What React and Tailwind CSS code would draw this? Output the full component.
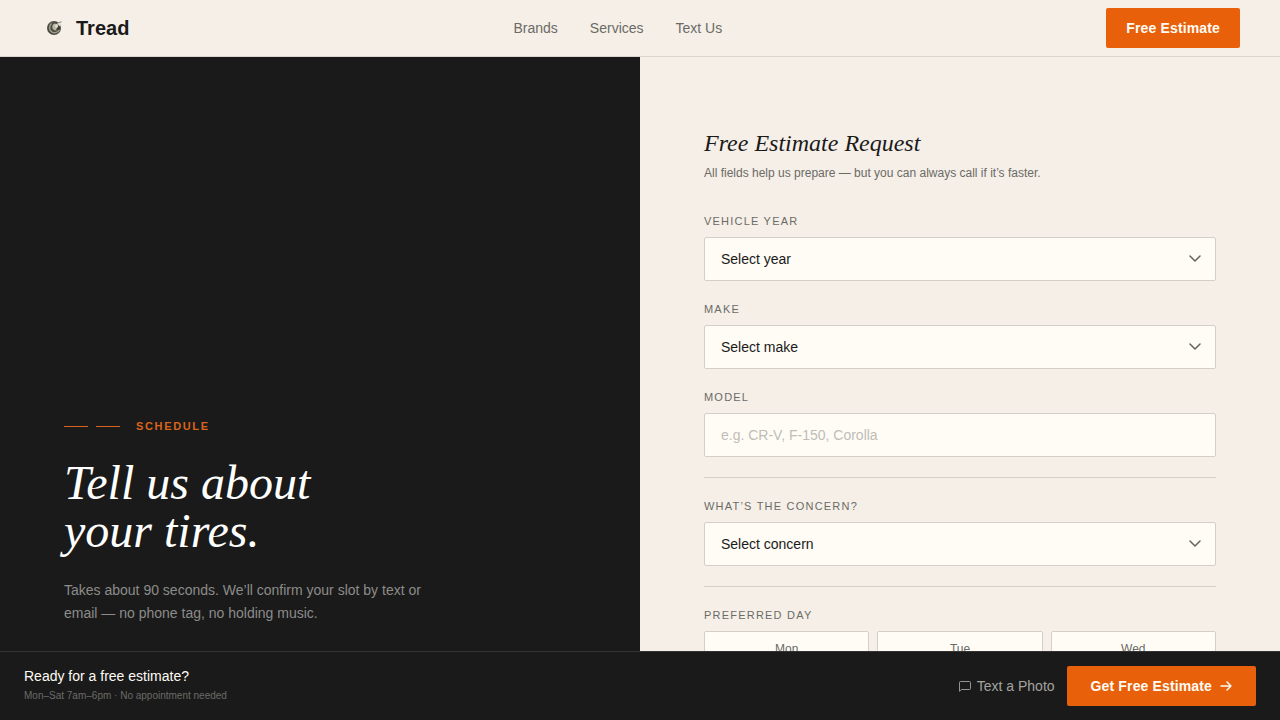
import React from "react";

const sans = "font-['Liberation_Sans',Arial,sans-serif]";
const serif = "font-['Liberation_Serif','Times_New_Roman',serif]";

function LogoMark() {
  return (
    <svg className="size-7" viewBox="0 0 28 28" aria-hidden="true">
      <circle cx="14" cy="14" r="7" fill="#4b4a42" />
      <path d="M11.500 9.500c-2.800 2.200-2.600 7 .6 8.600 2.800 1.400 6 .2 7.200-2.400" stroke="#a19d8c" strokeWidth="1.500" fill="none" />
      <path d="M14.500 9.500c-2.400 1-3 4.200-1.200 6 1.800 1.600 4.400 1 5.400-1l-1.800-4.400z" fill="#b9b5a2" />
      <path d="M14.500 11.500l2.600-1.800 1.200 2.400-2.200 2.200z" fill="#dedacb" />
      <path d="M18 8.200l3 1.800-1 2.400-2.600-2.400z" fill="#e4dfd2" />
      <path d="M15.800 15.600l3-3.400 1.200.8-1.600 3z" fill="#37362f" />
      <path d="M17.800 8.800l3.800-1" stroke="#8b887c" strokeWidth="1" />
      <path d="M9 10.500a6.200 6.200 0 0 1 5-3" stroke="#77746a" strokeWidth=".8" fill="none" />
    </svg>
  );
}

function Chevron() {
  return (
    <svg
      className="pointer-events-none absolute top-1/2 right-[15px] h-2 w-3 -translate-y-1/2"
      viewBox="0 0 12 8"
      fill="none"
      stroke="#66635e"
      strokeWidth="1.5"
      strokeLinecap="round"
      strokeLinejoin="round"
      aria-hidden="true"
    >
      <path d="M1 1l5 5 5-5" />
    </svg>
  );
}

const labelClass = "text-[11px] leading-4 tracking-[0.11em] text-[#6b6b66] uppercase";
const controlClass =
  "block h-11 w-full appearance-none rounded-xs border border-[#d4d0c8] bg-[#fefcf5] px-4 text-sm text-[#1a1a1a] placeholder:text-[#bfbcb8]";

function SelectField({ id, label, placeholder, options }) {
  return (
    <div className="flex flex-col gap-2">
      <label htmlFor={id} className={labelClass}>{label}</label>
      <div className="relative">
        <select id={id} className={controlClass} defaultValue="">
          <option value="">{placeholder}</option>
          {options.map((o) => (
            <option key={o}>{o}</option>
          ))}
        </select>
        <Chevron />
      </div>
    </div>
  );
}

export default function App() {
  return (
    <div className={`min-h-screen bg-[#f5efe8] text-[#1a1a1a] ${sans}`}>
      <header className="sticky top-0 z-10 flex h-[57px] items-center justify-between border-b border-[#dad6ce] bg-[#f5efe8] px-10">
        <a href="#top" className="flex items-center gap-2 text-xl font-bold">
          <LogoMark />
          Tread
        </a>
        <nav className="flex gap-8 text-sm text-[#6b6b66]">
          <a href="#brands">Brands</a>
          <a href="#services">Services</a>
          <a href="#text">Text Us</a>
        </nav>
        <a href="#estimate" className="flex h-10 items-center rounded-xs bg-[#e8610a] px-5 text-sm font-bold tracking-[0.01em] text-[#fefcf5]">
          Free Estimate
        </a>
      </header>

      <main className="grid grid-cols-2">
        <div className="bg-[#1a1a1a]">
          <section className="sticky top-[57px] flex h-[calc(100vh-57px)] flex-col justify-end px-16 pb-[95px]">
            <div className="flex items-center gap-2">
              <span className="h-px w-6 bg-[#d8651c]" />
              <span className="h-px w-6 bg-[#d8651c]" />
              <span className="ml-2 text-[11px] leading-4 font-bold tracking-[0.15em] text-[#d9631c] uppercase">Schedule</span>
            </div>
            <h1 className={`mt-[25px] text-5xl leading-[48px] text-white italic ${serif}`}>
              Tell us about
              <br />
              your tires.
            </h1>
            <p className="mt-6 max-w-[380px] text-sm leading-[23px] text-[#8c8c8a]">
              Takes about 90 seconds. We’ll confirm your slot by text or email — no phone tag, no holding music.
            </p>
          </section>
        </div>

        <section id="estimate" className="px-16 pt-[72px] pb-32">
          <h2 className={`text-2xl leading-7 italic ${serif}`}>Free Estimate Request</h2>
          <p className="mt-2 text-xs leading-4 text-[#6b6b66]">
            All fields help us prepare — but you can always call if it’s faster.
          </p>
          <form className="mt-8 flex flex-col gap-5">
            <SelectField id="year" label="Vehicle Year" placeholder="Select year" options={["2024", "2023", "2022"]} />
            <SelectField id="make" label="Make" placeholder="Select make" options={["Honda", "Ford", "Toyota"]} />
            <div className="flex flex-col gap-2">
              <label htmlFor="model" className={labelClass}>Model</label>
              <input id="model" type="text" placeholder="e.g. CR-V, F-150, Corolla" className={controlClass} />
            </div>
            <hr className="border-[#d4d0c8]" />
            <SelectField id="concern" label="What’s the concern?" placeholder="Select concern" options={["Flat tire", "Worn tread", "Vibration"]} />
            <hr className="border-[#d4d0c8]" />
            <fieldset>
              <legend className={`mb-2 ${labelClass}`}>Preferred Day</legend>
              <div className="grid grid-cols-3 gap-2">
                {["Mon", "Tue", "Wed"].map((day) => (
                  <button key={day} type="button" className="h-9 rounded-xs border border-[#d4d0c8] bg-[#fefcf5] text-xs text-[#6b6b66]">
                    {day}
                  </button>
                ))}
              </div>
            </fieldset>
          </form>
        </section>
      </main>

      <aside className="fixed inset-x-0 bottom-0 z-10 flex items-center justify-between border-t border-[#333333] bg-[#1a1a1a] px-6 py-3.5">
        <div>
          <p className="text-sm leading-5 text-[#fefcf5]">Ready for a free estimate?</p>
          <p className="text-[10px] leading-5 text-[#6b6b68]">Mon–Sat 7am–6pm · No appointment needed</p>
        </div>
        <div className="flex items-center gap-3">
          <a href="#text" className="flex items-center gap-1.5 text-sm text-[#a3a3a0]">
            <svg className="size-3" viewBox="0 0 12 12" fill="none" stroke="currentColor" strokeWidth=".9" strokeLinejoin="round" aria-hidden="true">
              <path d="M.5 11.300V2.500A1 1 0 0 1 1.500 1.500h9A1 1 0 0 1 11.500 2.500v6A1 1 0 0 1 10.500 9.500H2.500z" />
            </svg>
            Text a Photo
          </a>
          <a href="#estimate" className="flex h-10 items-center gap-2 rounded-xs bg-[#e8610a] px-6 text-sm font-bold tracking-[0.01em] text-[#fefcf5]">
            Get Free Estimate
            <svg className="size-3" viewBox="0 0 12 12" fill="none" stroke="currentColor" strokeWidth="1.4" strokeLinecap="round" strokeLinejoin="round" aria-hidden="true">
              <path d="M1 6h10M7 2l4 4-4 4" />
            </svg>
          </a>
        </div>
      </aside>
    </div>
  );
}
